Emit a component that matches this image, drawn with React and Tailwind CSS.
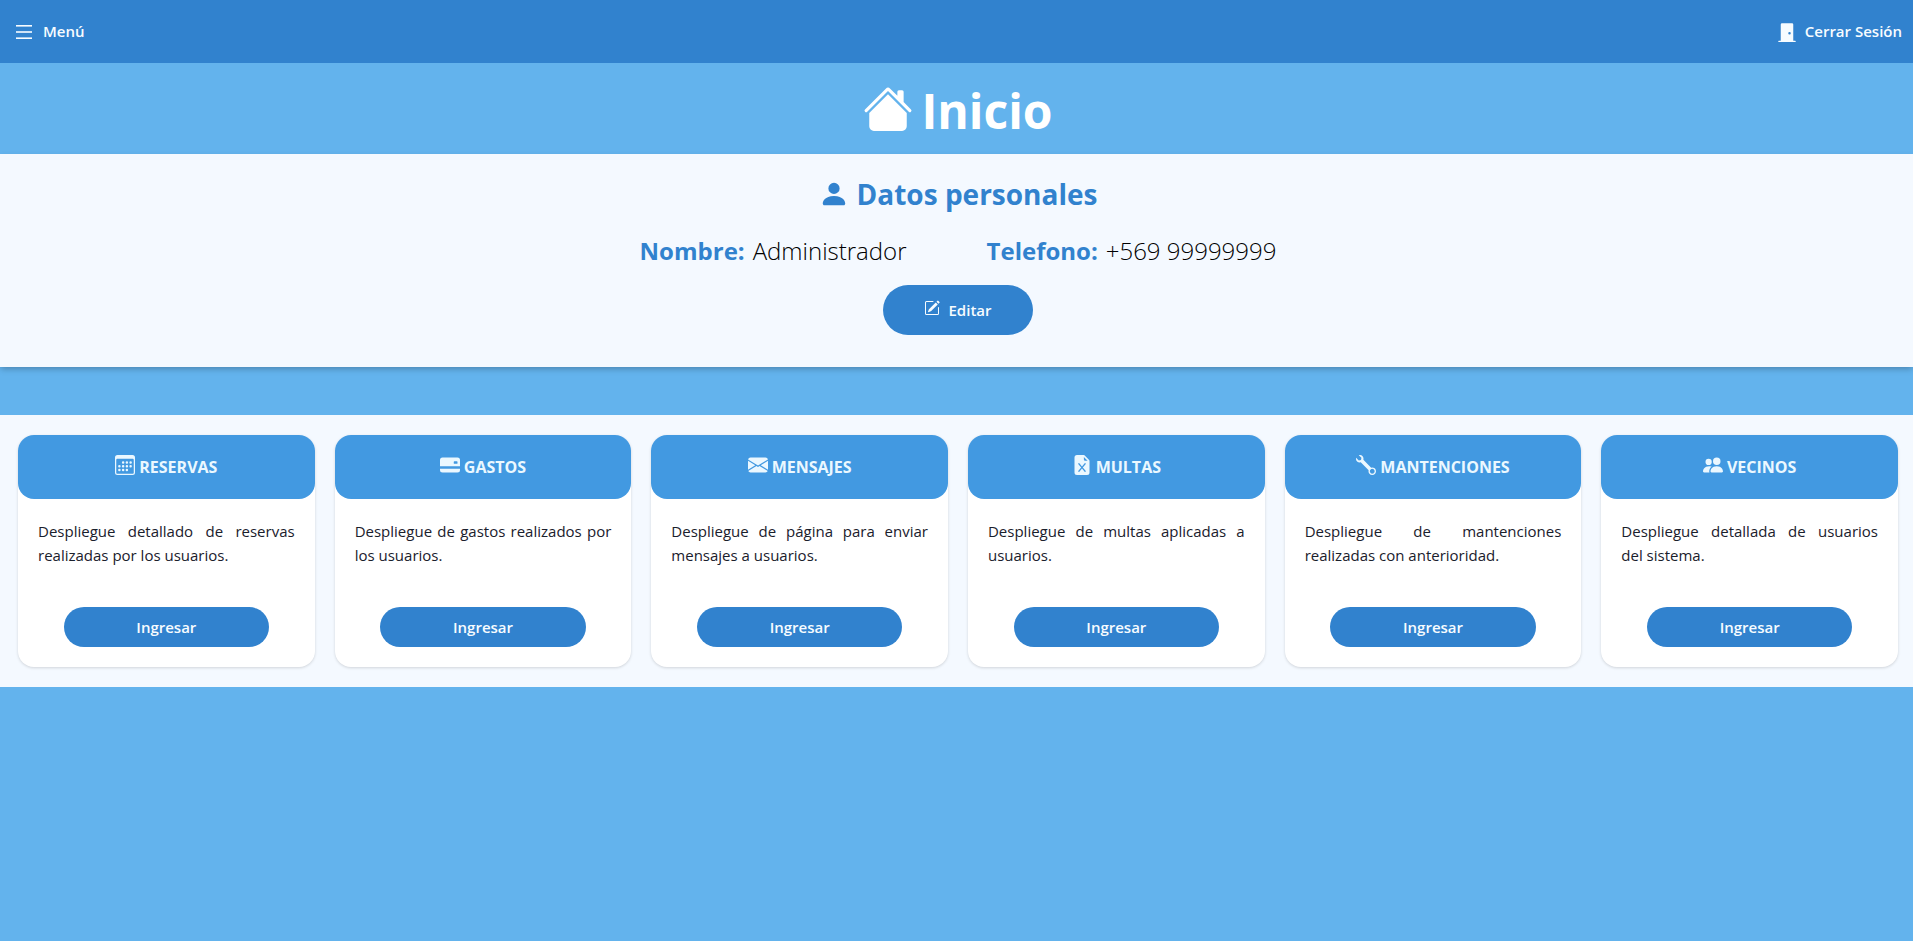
import React from "react";
import {
  BsCalendar3,
  BsCreditCard2BackFill,
  BsDoorClosedFill,
  BsEnvelopeFill,
  BsFileEarmarkExcelFill,
  BsHouseFill,
  BsPencilSquare,
  BsPeopleFill,
  BsPersonFill,
  BsWrench,
} from "react-icons/bs";

const sections = [
  { title: "RESERVAS", Icon: BsCalendar3, text: "Despliegue detallado de reservas realizadas por los usuarios." },
  { title: "GASTOS", Icon: BsCreditCard2BackFill, text: "Despliegue de gastos realizados por los usuarios." },
  { title: "MENSAJES", Icon: BsEnvelopeFill, text: "Despliegue de página para enviar mensajes a usuarios." },
  { title: "MULTAS", Icon: BsFileEarmarkExcelFill, text: "Despliegue de multas aplicadas a usuarios." },
  { title: "MANTENCIONES", Icon: BsWrench, text: "Despliegue de mantenciones realizadas con anterioridad." },
  { title: "VECINOS", Icon: BsPeopleFill, text: "Despliegue detallada de usuarios del\u00a0sistema." },
];

function MenuIcon() {
  return (
    <svg width="16" height="14" viewBox="0 0 16 14" fill="currentColor" aria-hidden="true">
      <rect y="0" width="16" height="1.6" />
      <rect y="6.2" width="16" height="1.6" />
      <rect y="12.4" width="16" height="1.6" />
    </svg>
  );
}

function Field({ label, value }) {
  return (
    <div className="flex gap-2">
      <dt className="font-bold text-[#3182ce]">{label}</dt>
      <dd className="font-light text-black">{value}</dd>
    </div>
  );
}

function Card({ title, Icon, text }) {
  return (
    <article className="flex flex-col rounded-2xl bg-white shadow-[0_1px_3px_rgba(0,0,0,0.15)]">
      <h3 className="flex h-16 items-center justify-center gap-1 rounded-2xl bg-[#4299e1] text-base font-bold text-[#ebf8ff]">
        <Icon className="mb-1 size-5" aria-hidden="true" />
        {title}
      </h3>
      <div className="flex grow flex-col gap-10 p-5">
        <p className="grow text-justify text-[15px] leading-6">{text}</p>
        <button type="button" className="h-10 w-4/5 self-center rounded-full bg-[#3182ce] text-[15px] font-semibold text-[#f7fcff]">
          Ingresar
        </button>
      </div>
    </article>
  );
}

export default function App() {
  return (
    <div className="min-h-screen bg-[#63b3ed] font-['Open_Sans','Noto_Sans',sans-serif] text-[#1a202c]">
      <nav className="flex h-[63px] items-center justify-between bg-[#3182ce] pr-[11px] pl-4 text-[15px] font-semibold text-[#f7fcff]">
        <button type="button" className="flex items-center gap-[11px]">
          <MenuIcon />
          Menú
        </button>
        <a href="#salir" className="flex items-center gap-2">
          <BsDoorClosedFill className="size-5" aria-hidden="true" />
          Cerrar Sesión
        </a>
      </nav>

      <header className="flex h-[91px] items-center justify-center gap-2 pl-[3px] text-white">
        <BsHouseFill className="size-[50px]" aria-hidden="true" />
        <h1 className="pt-1 text-5xl font-bold">Inicio</h1>
      </header>

      <main className="flex flex-col gap-12">
        <section className="flex flex-col items-center bg-[#f4f9ff] pt-4 pb-8 pl-[3px] shadow-[0_3px_6px_-1px_rgba(0,0,0,0.25)]">
          <h2 className="flex items-center gap-2 text-[28px] leading-[48px] font-bold text-[#3182ce]">
            <BsPersonFill className="size-[30px]" aria-hidden="true" />
            Datos personales
          </h2>
          <dl className="mt-[15px] flex gap-20 text-2xl leading-9">
            <Field label="Nombre:" value="Administrador" />
            <Field label="Telefono:" value="+569 99999999" />
          </dl>
          <button type="button" className="mt-4 flex h-[50px] w-[150px] items-center justify-center gap-2 rounded-full bg-[#3182ce] text-[15px] font-semibold text-[#f7fcff]">
            <BsPencilSquare className="mb-1 size-4" aria-hidden="true" />
            Editar
          </button>
        </section>

        <section className="grid grid-cols-6 gap-5 bg-[#f4f9ff] py-5 pr-[15px] pl-[18px]">
          {sections.map((section) => (
            <Card key={section.title} {...section} />
          ))}
        </section>
      </main>
    </div>
  );
}
